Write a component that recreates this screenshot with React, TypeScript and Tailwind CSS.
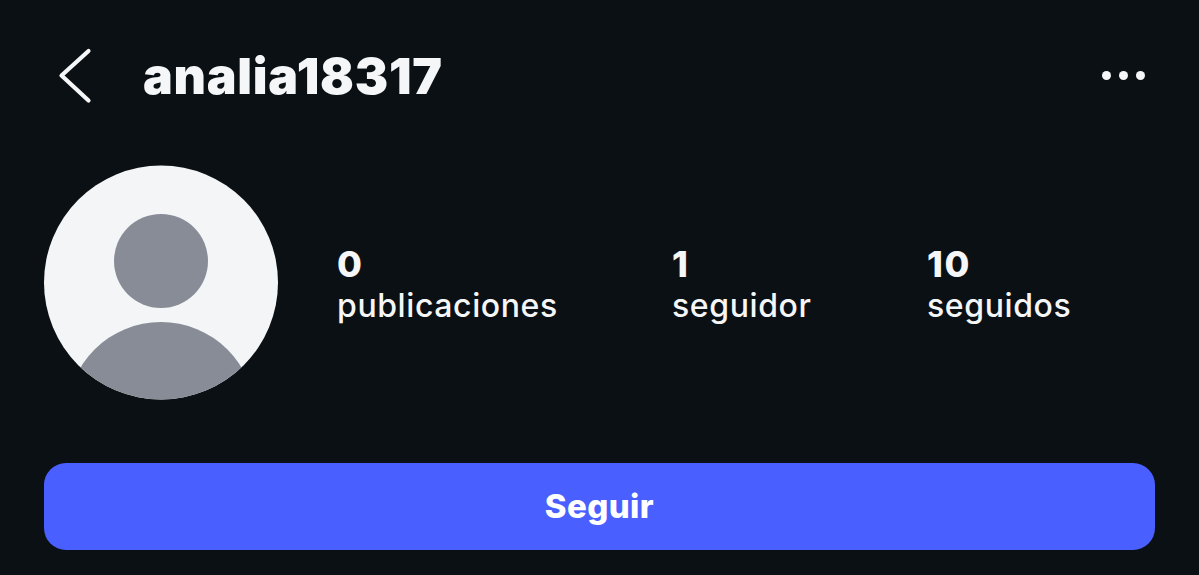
import React from 'react';

const stats = [
  { value: '0', label: 'publicaciones', width: 'w-[335px]' },
  { value: '1', label: 'seguidor', width: 'w-[255px]' },
  { value: '10', label: 'seguidos', width: 'w-auto' },
];

const App: React.FC = () => {
  return (
    <div className="w-[1199px] h-[575px] overflow-hidden bg-[#0b1014] text-[#f5f6f8] font-['Inter','Liberation_Sans',sans-serif]">
      <header className="flex items-center h-[152px] pl-[58px] pr-[54px] pb-[1px]">
        <svg width="34" height="56" viewBox="0 0 34 56" fill="none" className="shrink-0">
          <path d="M30.5 3 L3.5 27.5 L30.5 52.5" stroke="#f5f6f8" strokeWidth="4.2" strokeLinecap="round" strokeLinejoin="round" />
        </svg>
        <h1 className="ml-[51px] text-[50px] leading-none font-black tracking-[0.7px]">analia18317</h1>
        <div className="ml-auto flex gap-[8px]">
          <span className="w-[9px] h-[9px] rounded-full bg-[#f5f6f8]" />
          <span className="w-[9px] h-[9px] rounded-full bg-[#f5f6f8]" />
          <span className="w-[9px] h-[9px] rounded-full bg-[#f5f6f8]" />
        </div>
      </header>

      <section className="flex items-center pl-[44px] mt-[13px]">
        <svg width="234" height="235" viewBox="0 0 234 235" className="shrink-0">
          <defs>
            <clipPath id="avatar-clip">
              <circle cx="117" cy="117.5" r="117" />
            </clipPath>
          </defs>
          <circle cx="117" cy="117.5" r="117" fill="#f4f5f7" />
          <circle cx="117" cy="96" r="47" fill="#878c97" />
          <circle cx="117" cy="251" r="94" fill="#878c97" clipPath="url(#avatar-clip)" />
        </svg>
        <div className="flex ml-[59px] pt-[4px]">
          {stats.map((s) => (
            <div key={s.label} className={s.width}>
              <div className="text-[36px] leading-[42px] font-extrabold tracking-[1.5px]">{s.value}</div>
              <div className="text-[32px] leading-[42px] font-medium tracking-[0.6px]">{s.label}</div>
            </div>
          ))}
        </div>
      </section>

      <div className="px-[44px] mt-[63px]">
        <button className="w-full h-[87px] rounded-[22px] bg-[#4a5fff] text-white text-[33px] font-extrabold tracking-[0.4px]">
          Seguir
        </button>
      </div>
    </div>
  );
};

export default App;
